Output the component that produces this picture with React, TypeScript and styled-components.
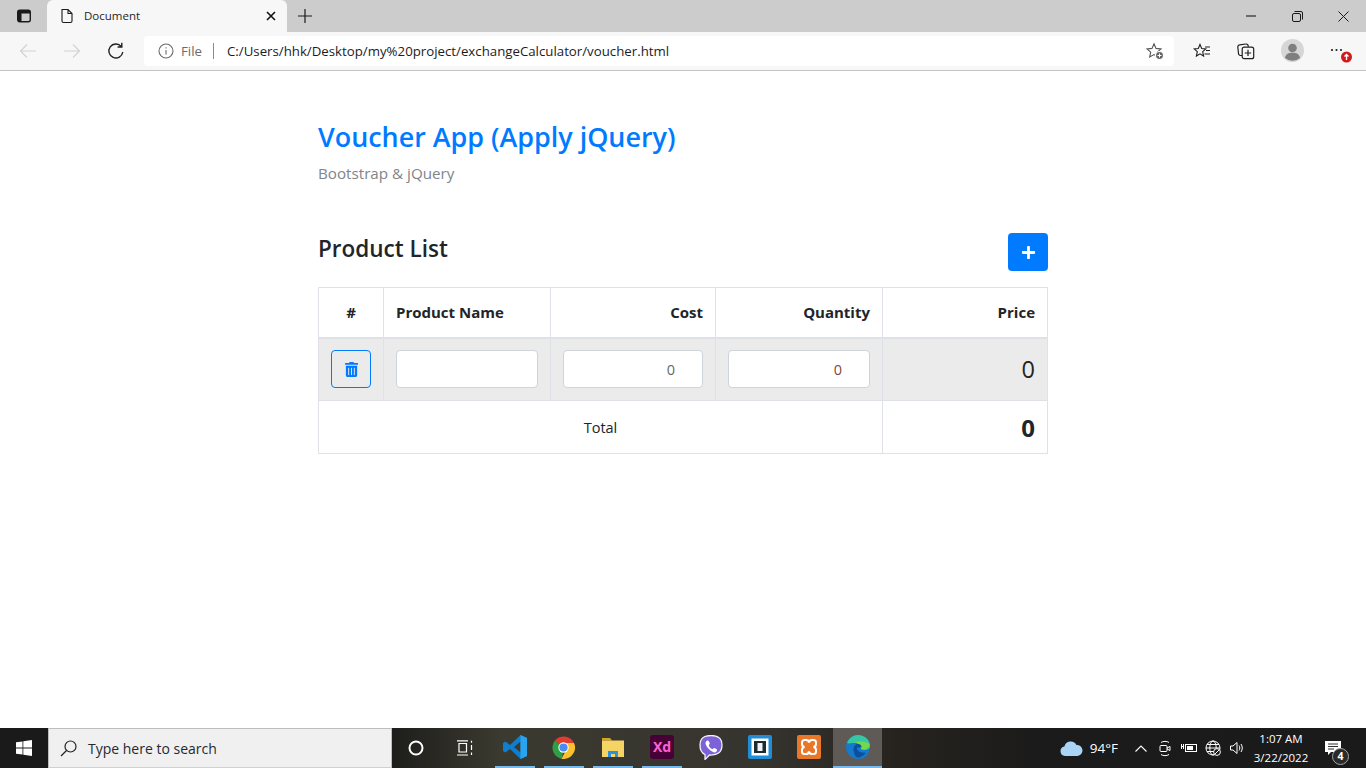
import { createGlobalStyle } from "styled-components";
import styled from "styled-components";
import { FaPlus, FaTrashAlt } from "react-icons/fa";

const GlobalStyle = createGlobalStyle`
	* {
		box-sizing: border-box;
	}
	html,
	body {
		margin: 0;
		height: 100%;
		background: #fff;
	}
	body {
		font-family: "Open Sans", "Noto Sans", "Liberation Sans", sans-serif;
		color: #212529;
		overflow: hidden;
	}
`;

const Screen = styled.div`
	width: 1366px;
	height: 768px;
	display: flex;
	flex-direction: column;
`;

/* browser chrome */
const TabBar = styled.div`
	height: 32px;
	flex: none;
	display: flex;
	background: #cccccc;
`;

const TabsButton = styled.div`
	width: 47px;
	display: flex;
	align-items: center;
	justify-content: center;
`;

const Tab = styled.div`
	width: 240px;
	display: flex;
	align-items: center;
	padding: 0 11px 1px 13px;
	background: #f7f7f7;
	border-radius: 6px 6px 0 0;
	font-size: 11.5px;
	color: #1f1f1f;
`;

const TabTitle = styled.span`
	flex: 1;
	margin-left: 10px;
`;

const NewTab = styled.div`
	width: 36px;
	display: flex;
	align-items: center;
	justify-content: center;
`;

const WindowControls = styled.div`
	margin-left: auto;
	display: flex;
`;

const WindowButton = styled.div`
	width: 46px;
	display: flex;
	align-items: center;
	justify-content: center;
`;

const Toolbar = styled.div`
	height: 39px;
	flex: none;
	display: flex;
	align-items: center;
	padding: 0 6px 1px;
	background: #f7f7f7;
	border-bottom: 1px solid #c4c4c4;
`;

const ToolButton = styled.div`
	width: 44px;
	height: 30px;
	flex: none;
	display: flex;
	align-items: center;
	justify-content: center;
`;

const ProfileButton = styled(ToolButton)`
	margin-left: 2px;
`;

const AddressBar = styled.div`
	width: 1030px;
	height: 30px;
	margin: 0 6px;
	display: flex;
	align-items: center;
	padding: 0 10px 0 14px;
	background: #fff;
	border-radius: 4px;
	font-size: 13.25px;
`;

const FileLabel = styled.span`
	margin-left: 7px;
	color: #6b6b6b;
`;

const Divider = styled.span`
	width: 1px;
	height: 16px;
	margin: 0 13px 0 11px;
	background: #8a8a8a;
`;

const Url = styled.span`
	flex: 1;
	color: #1c1c1c;
`;

/* page */
const Main = styled.main`
	flex: 1;
	width: 730px;
	margin: 0 auto;
	padding-top: 47px;
`;

const Title = styled.h1`
	margin: 0;
	font-size: 26.9px;
	line-height: 38px;
	font-weight: 600;
	color: #007bff;
`;

const Subtitle = styled.p`
	margin: 6px 0 0;
	font-size: 15.2px;
	line-height: 22px;
	color: #80858a;
`;

const ListHeader = styled.div`
	display: flex;
	justify-content: space-between;
	align-items: flex-start;
	margin-top: 49px;
`;

const ListTitle = styled.h2`
	margin: 0;
	font-size: 22.5px;
	line-height: 32px;
	font-weight: 600;
	color: #212529;
`;

const AddButton = styled.button`
	width: 40px;
	height: 38px;
	padding: 0;
	display: flex;
	align-items: center;
	justify-content: center;
	border: 0;
	border-radius: 4px;
	background: #007bff;
	color: #fff;
	font-size: 15px;
`;

const Table = styled.table`
	width: 729px;
	margin-top: 16px;
	border-collapse: collapse;
	table-layout: fixed;
	font-size: 15px;
`;

const HeadCell = styled.th<{ $w: number; $align?: string }>`
	width: ${(p) => p.$w}px;
	height: 50px;
	padding: 0 12px;
	text-align: ${(p) => p.$align || "left"};
	font-size: 15px;
	font-weight: 700;
	border: 1px solid #dee2e6;
	border-bottom: 2px solid #dee2e6;
`;

const BodyRow = styled.tr`
	background: #ebebeb;
`;

const Cell = styled.td<{ $align?: string }>`
	height: 63px;
	padding: 0 12px;
	text-align: ${(p) => p.$align || "left"};
	border: 1px solid #dee2e6;
`;

const TotalCell = styled.td<{ $align?: string; $big?: boolean }>`
	height: 53px;
	padding: 0 12px;
	text-align: ${(p) => p.$align || "left"};
	border: 1px solid #dee2e6;
	font-size: ${(p) => (p.$big ? "24px" : "14.5px")};
	font-weight: ${(p) => (p.$big ? 700 : 400)};
`;

const PriceValue = styled.span`
	font-size: 23.5px;
	font-weight: 500;
`;

const DeleteButton = styled.button`
	width: 40px;
	height: 38px;
	padding: 0;
	display: flex;
	align-items: center;
	justify-content: center;
	background: transparent;
	border: 1px solid #007bff;
	border-radius: 4px;
	color: #007bff;
	font-size: 15px;
`;

const Field = styled.input<{ $tone?: string }>`
	display: block;
	width: 100%;
	height: 38px;
	padding: 0 27px 0 12px;
	background: #fff;
	border: 1px solid #ced4da;
	border-radius: 4px;
	font-family: inherit;
	font-size: 14.5px;
	text-align: right;
	color: ${(p) => p.$tone || "#6a6a60"};
`;

/* taskbar */
const Taskbar = styled.div`
	height: 40px;
	flex: none;
	display: flex;
	color: #fff;
	background: linear-gradient(90deg, #1a1a1a 0, #1d1d1b 392px, #3b3a30 500px, #36342e 760px, #26231f 900px, #1b1b1b 1040px, #1a1a1a 100%);
`;

const StartButton = styled.div`
	width: 48px;
	display: flex;
	align-items: center;
	justify-content: center;
`;

const SearchBox = styled.div`
	width: 344px;
	display: flex;
	align-items: center;
	padding-left: 11px;
	background: #f0f0f0;
	border: 1px solid #bdbdbd;
	border-bottom-color: #d0d0d0;
	font-size: 14px;
	color: #1f2a33;
`;

const SearchText = styled.span`
	margin-left: 11px;
`;

const SystemButton = styled.div`
	width: 48px;
	display: flex;
	align-items: center;
	justify-content: center;
`;

const Apps = styled.div`
	display: flex;
	margin-left: 2px;
`;

const AppSlot = styled.div<{ $active?: boolean; $running?: boolean }>`
	position: relative;
	width: 49px;
	display: flex;
	align-items: center;
	justify-content: center;
	padding-bottom: 2px;
	background: ${(p) => (p.$active ? "#5f5a55" : "transparent")};
	&::after {
		content: "";
		display: ${(p) => (p.$running || p.$active ? "block" : "none")};
		position: absolute;
		bottom: 0;
		left: ${(p) => (p.$active ? "0" : "4.5px")};
		right: ${(p) => (p.$active ? "0" : "4.5px")};
		height: 2px;
		background: #76b9ed;
	}
`;

const Tray = styled.div`
	margin-left: auto;
	display: flex;
	align-items: center;
`;

const Weather = styled.div`
	display: flex;
	align-items: center;
	gap: 7px;
	margin-right: 11px;
	font-size: 13.5px;
`;

const TrayIcon = styled.div`
	width: 24px;
	display: flex;
	justify-content: center;
`;

const Clock = styled.div`
	width: 60px;
	margin-left: 2px;
	text-align: center;
	font-size: 11.5px;
	line-height: 19px;
	white-space: nowrap;
`;

const Notifications = styled.div`
	position: relative;
	width: 36px;
	margin: 0 15px 0 4px;
	display: flex;
	justify-content: center;
`;

const NotificationCount = styled.span`
	position: absolute;
	top: 7px;
	left: 17px;
	width: 17px;
	height: 17px;
	display: flex;
	align-items: center;
	justify-content: center;
	border-radius: 50%;
	background: #2a2a2a;
	border: 1px solid #a5a5a5;
	font-size: 10.5px;
	font-weight: 700;
`;

const Ico = styled.svg.attrs<{ stroke?: string }>((p) => ({
	stroke: p.stroke ?? "currentColor",
	fill: "none",
}))`
	display: block;
	flex: none;
`;

const AppBadgeText = styled.text`
	font-family: "Open Sans", sans-serif;
	font-size: 14px;
	font-weight: 700;
	fill: #ff61d5;
`;

function App() {
	return (
		<Screen>
			<GlobalStyle />
			<TabBar>
				<TabsButton>
					<Ico width="16" height="16" viewBox="0 0 16 16" color="#1a1a1a" strokeWidth="1.4">
						<rect x="1.700" y="2.200" width="12.600" height="11.600" rx="2" />
						<path d="M2 3h12v2.500H2zM2 5.500h3.500V13.500H2z" fill="#1a1a1a" stroke="none" />
					</Ico>
				</TabsButton>
				<Tab>
					<Ico width="14" height="16" viewBox="0 0 14 16" color="#1a1a1a" strokeWidth="1.1">
						<path d="M2 1.500h6l4 4V13a1.500 1.500 0 0 1-1.500 1.500h-7A1.500 1.500 0 0 1 2 13zM8 1.500v4h4" />
					</Ico>
					<TabTitle>Document</TabTitle>
					<Ico width="10" height="10" viewBox="0 0 10 10" color="#111" strokeWidth="1.600">
						<path d="M1 1l8 8M9 1l-8 8" />
					</Ico>
				</Tab>
				<NewTab>
					<Ico width="16" height="16" viewBox="0 0 16 16" color="#1a1a1a" strokeWidth="1.200">
						<path d="M8 1v14M1 8h14" />
					</Ico>
				</NewTab>
				<WindowControls>
					<WindowButton>
						<Ico width="10" height="2" viewBox="0 0 10 2" color="#1a1a1a" strokeWidth="1.100">
							<path d="M0 1h10" />
						</Ico>
					</WindowButton>
					<WindowButton>
						<Ico width="11" height="11" viewBox="0 0 11 11" color="#1a1a1a" strokeWidth="1">
							<rect x=".5" y="2.500" width="8" height="8" rx="1.500" />
							<path d="M2.500 .5h6.500a1.500 1.500 0 0 1 1.500 1.500v6.500" />
						</Ico>
					</WindowButton>
					<WindowButton>
						<Ico width="11" height="11" viewBox="0 0 11 11" color="#1a1a1a" strokeWidth="1">
							<path d="M.5 .5l10 10M10.500 .5l-10 10" />
						</Ico>
					</WindowButton>
				</WindowControls>
			</TabBar>

			<Toolbar>
				<ToolButton>
					<Ico width="18" height="16" viewBox="0 0 18 16" color="#d2d2d2" strokeWidth="1.200">
						<path d="M17 8H1.500M8 1.500L1.500 8 8 14.500" />
					</Ico>
				</ToolButton>
				<ToolButton>
					<Ico width="18" height="16" viewBox="0 0 18 16" color="#d2d2d2" strokeWidth="1.200">
						<path d="M1 8h15.500M10 1.500L16.500 8 10 14.500" />
					</Ico>
				</ToolButton>
				<ToolButton>
					<Ico width="18" height="18" viewBox="0 0 18 18" color="#1f1f1f" strokeWidth="1.400">
						<path d="M15.800 10a7 7 0 1 1-1.600-5.600M14.800 .8v4.200h-4.200" />
					</Ico>
				</ToolButton>
				<AddressBar>
					<Ico width="16" height="16" viewBox="0 0 16 16" color="#6b6b6b" strokeWidth="1.100">
						<circle cx="8" cy="8" r="7" />
						<path d="M8 7v4.500M8 4.200v1.300" />
					</Ico>
					<FileLabel>File</FileLabel>
					<Divider />
					<Url>C:/Users/hhk/Desktop/my%20project/exchangeCalculator/voucher.html</Url>
					<Ico width="18" height="18" viewBox="0 0 18 18" color="#555" strokeWidth="1.100">
						<path d="M8 1.800l2 4.600 5 .5-3.700 3.300 1 4.800L8 12.600l-4.300 2.400 1-4.800L1 6.900l5-.5z" />
						<circle cx="13.500" cy="13.500" r="4" fill="#666" stroke="#fff" />
						<path d="M13.500 11.500v4M11.500 13.500h4" stroke="#fff" strokeWidth="1" />
					</Ico>
				</AddressBar>
				<ToolButton>
					<Ico width="18" height="18" viewBox="0 0 18 18" color="#1f1f1f" strokeWidth="1.100">
						<path d="M7 2.500l1.700 4 4.100.4-3.100 2.800.9 4.300L7 11.800l-3.600 2.200.9-4.300L1.200 6.900l4.100-.4zM12 5h5M13 8.500h4M11.500 12h5.500" />
					</Ico>
				</ToolButton>
				<ToolButton>
					<Ico width="18" height="18" viewBox="0 0 18 18" color="#1f1f1f" strokeWidth="1.200">
						<path d="M5 13.500H3.500a2 2 0 0 1-2-2l-.7-6.500a2 2 0 0 1 1.800-2.200L9 2a2 2 0 0 1 2.200 1.800l.1 1" />
						<rect x="5.200" y="5.200" width="11.500" height="11.500" rx="2" />
						<path d="M11 7.800v6.300M7.800 11h6.300" />
					</Ico>
				</ToolButton>
				<ProfileButton>
					<Ico width="23" height="23" viewBox="0 0 23 23" stroke="none">
						<circle cx="11.500" cy="11.500" r="11.500" fill="#d6d6d6" />
						<circle cx="11.500" cy="9" r="4.300" fill="#7f7f7f" />
						<path d="M4 19c.8-4 3.600-5.200 7.500-5.200S18.200 15 19 19a11.500 11.500 0 0 1-15 0z" fill="#7f7f7f" />
					</Ico>
				</ProfileButton>
				<ProfileButton>
					<Ico width="28" height="24" viewBox="0 0 28 24" stroke="none">
						<circle cx="8" cy="11" r="1.100" fill="#1f1f1f" />
						<circle cx="12.500" cy="11" r="1.100" fill="#1f1f1f" />
						<circle cx="17" cy="11" r="1.100" fill="#1f1f1f" />
						<circle cx="22.500" cy="18" r="5.500" fill="#d11a1a" />
						<path d="M22.500 21v-5.500M20.500 17.500l2-2 2 2" stroke="#fff" strokeWidth="1.300" fill="none" />
					</Ico>
				</ProfileButton>
			</Toolbar>

			<Main>
				<Title>Voucher App (Apply jQuery)</Title>
				<Subtitle>Bootstrap &amp; jQuery</Subtitle>
				<ListHeader>
					<ListTitle>Product List</ListTitle>
					<AddButton>
						<FaPlus />
					</AddButton>
				</ListHeader>
				<Table>
					<thead>
						<tr>
							<HeadCell $w={65} $align="center">#</HeadCell>
							<HeadCell $w={167}>Product Name</HeadCell>
							<HeadCell $w={165} $align="right">Cost</HeadCell>
							<HeadCell $w={167} $align="right">Quantity</HeadCell>
							<HeadCell $w={165} $align="right">Price</HeadCell>
						</tr>
					</thead>
					<tbody>
						<BodyRow>
							<Cell>
								<DeleteButton>
									<FaTrashAlt />
								</DeleteButton>
							</Cell>
							<Cell>
								<Field type="text" />
							</Cell>
							<Cell>
								<Field type="text" defaultValue="0" />
							</Cell>
							<Cell>
								<Field type="text" defaultValue="0" $tone="#7d4a45" />
							</Cell>
							<Cell $align="right">
								<PriceValue>0</PriceValue>
							</Cell>
						</BodyRow>
						<tr>
							<TotalCell colSpan={4} $align="center">Total</TotalCell>
							<TotalCell $align="right" $big>0</TotalCell>
						</tr>
					</tbody>
				</Table>
			</Main>

			<Taskbar>
				<StartButton>
					<Ico width="16" height="16" viewBox="0 0 16 16" stroke="none">
						<path d="M0 2.300l6.500-.9v6.200H0zM7.300 1.300L16 0v7.600H7.300zM0 8.400h6.500v6.200L0 13.700zM7.300 8.400H16V16l-8.700-1.300z" fill="#fff" />
					</Ico>
				</StartButton>
				<SearchBox>
					<Ico width="17" height="17" viewBox="0 0 17 17" color="#222" strokeWidth="1.200">
						<circle cx="10.500" cy="6.500" r="5.500" />
						<path d="M6.500 10.500L1 16" />
					</Ico>
					<SearchText>Type here to search</SearchText>
				</SearchBox>
				<SystemButton>
					<Ico width="16" height="16" viewBox="0 0 16 16" color="#fff" strokeWidth="2">
						<circle cx="8" cy="8" r="6.500" />
					</Ico>
				</SystemButton>
				<SystemButton>
					<Ico width="17" height="16" viewBox="0 0 17 16" color="#fff" strokeWidth="1.200">
						<path d="M1 .8h11M3 3.500h7.500v8.500H3zM1 15h11M15.500 .8v2M15.500 5v5M15.500 12.500v2.500" />
					</Ico>
				</SystemButton>
				<Apps>
					<AppSlot $running>
						<Ico width="24" height="24" viewBox="0 0 24 24" stroke="none">
							<path d="M17.500 0L24 3v18l-6.500 3L7 14l-4.500 3.500L0 16V8l2.500-1.500L7 10zM17.500 6.500L11 12l6.500 5.500z" fill="#0e7fd0" fillRule="evenodd" />
							<path d="M17.500 0L24 3v18l-6.500 3z" fill="#2aa3ee" />
						</Ico>
					</AppSlot>
					<AppSlot $running>
						<Ico width="23" height="23" viewBox="0 0 24 24" stroke="none">
							<path d="M12 12L2.800 5A12 12 0 0 1 23 7.200H12z" fill="#e33b2e" />
							<path d="M12 12l-1.500 11.900A12 12 0 0 1 2.800 5z" fill="#2f9e44" />
							<path d="M12 7.200h11A12 12 0 0 1 10 23.800L16 12z" fill="#fbc02d" />
							<circle cx="12" cy="12" r="5.400" fill="#fff" />
							<circle cx="12" cy="12" r="4.300" fill="#4a8af4" />
						</Ico>
					</AppSlot>
					<AppSlot $running>
						<Ico width="22" height="20" viewBox="0 0 22 20" stroke="none">
							<path d="M0 1h8l2 2.500H0z" fill="#d9a520" />
							<path d="M0 3.500h22V20H0z" fill="#f6d365" />
							<path d="M6 20v-6h10v6h-3v-3H9v3z" fill="#2f8fd8" />
						</Ico>
					</AppSlot>
					<AppSlot $running>
						<Ico width="24" height="24" viewBox="0 0 24 24" stroke="none">
							<rect width="24" height="24" rx="3" fill="#470137" />
							<AppBadgeText x="12" y="17" textAnchor="middle">Xd</AppBadgeText>
						</Ico>
					</AppSlot>
					<AppSlot>
						<Ico width="24" height="25" viewBox="0 0 24 25" stroke="none">
							<path d="M12 .5C5 .5 1 3 1 10c0 5 1.500 8 5 9.500V24.500l4.500-4.500C19 20.500 23 17 23 10S19 .5 12 .5z" fill="#7d61d6" stroke="#f2f0fb" strokeWidth="1.300" />
							<path d="M7.500 6c1-.8 2-.6 2.500.5l.7 1.500c.2.600 0 1.100-.7 1.700-.3.300-.3.600 0 1.200.8 1.400 1.700 2.300 3 3 .5.200.8.200 1.100-.2.600-.7 1.200-.9 1.800-.5l1.400.9c1 .7 1 1.700.2 2.500-1 1-2.300 1-3.600.5C10.500 15 8 12.500 6.800 9.500 6.300 8.100 6.500 6.900 7.500 6z" fill="#fff" />
						</Ico>
					</AppSlot>
					<AppSlot>
						<Ico width="24" height="24" viewBox="0 0 24 24" stroke="none">
							<rect width="24" height="24" rx="2" fill="#1f8ed6" />
							<rect x="3.500" y="3.500" width="17" height="17" fill="#fff" />
							<rect x="6" y="6" width="12" height="12" fill="#1b2a33" />
							<rect x="9.500" y="8" width="5" height="8" fill="#f2f2f2" />
						</Ico>
					</AppSlot>
					<AppSlot>
						<Ico width="24" height="24" viewBox="0 0 24 24" stroke="none">
							<rect width="24" height="24" rx="2" fill="#e8772a" />
							<path d="M5 7.500A2.500 2.500 0 0 1 7.500 5H9a3 3 0 0 1 3 2.500A3 3 0 0 1 15 5h1.500A2.500 2.500 0 0 1 19 7.500V9a3 3 0 0 1-2.500 3 3 3 0 0 1 2.500 3v1.500a2.500 2.500 0 0 1-2.500 2.500H15a3 3 0 0 1-3-2.500A3 3 0 0 1 9 19H7.500A2.500 2.500 0 0 1 5 16.500V15a3 3 0 0 1 2.500-3A3 3 0 0 1 5 9z" stroke="#fff" strokeWidth="2" fill="none" />
						</Ico>
					</AppSlot>
					<AppSlot $active>
						<Ico width="24" height="24" viewBox="0 0 24 24" stroke="none">
							<circle cx="12" cy="12" r="12" fill="#1679c9" />
							<path d="M1 8C3 3 7 0 12 0c7 0 12 5 12 11 0 3-3 4-6 4-2 0-3-1-3-2 0-3-2-5-6-5S2 9 1 8z" fill="#37c6a4" />
							<path d="M23.500 9c.5 3-2 5.500-5.500 5.500-2 0-3.500-.5-3.500-2 0-2-2-5-6-4.500 3-2 9-3 15 1z" fill="#72d84f" />
							<path d="M7.500 14c0-3 2-5 4.500-5s3.500 1.500 3.500 3.500H11c-.5 3 3 6 9 5-2.500 3.500-5.500 5-8.500 5C9 22 7.500 17 7.500 14z" fill="#0c4f9e" />
						</Ico>
					</AppSlot>
				</Apps>
				<Tray>
					<Weather>
						<Ico width="23" height="16" viewBox="0 0 23 16" stroke="none">
							<path d="M5 16a4.800 4.800 0 0 1-.6-9.500A6.500 6.500 0 0 1 16.500 5 5.500 5.500 0 0 1 17.500 16z" fill="#a9d4f5" />
						</Ico>
						<span>94°F</span>
					</Weather>
					<TrayIcon>
						<Ico width="12" height="7" viewBox="0 0 12 7" color="#fff" strokeWidth="1.100">
							<path d="M.5 6.500L6 1l5.500 5.500" />
						</Ico>
					</TrayIcon>
					<TrayIcon>
						<Ico width="12" height="17" viewBox="0 0 12 17" color="#fff" strokeWidth="1">
							<path d="M2 2.500c2-1.500 6-1.500 8 0M2 14.500c2 1.500 6 1.500 8 0" />
							<rect x="1" y="5.500" width="7" height="6" rx="1" />
							<path d="M8 8l3-1.500v4L8 9" />
						</Ico>
					</TrayIcon>
					<TrayIcon>
						<Ico width="16" height="12" viewBox="0 0 16 12" color="#fff" strokeWidth="1">
							<rect x="4.500" y="2.500" width="11" height="7" />
							<path d="M6 4h6v4H6z" fill="#fff" stroke="none" />
							<path d="M0 4.500h3M.5 2v5M2.500 2v5" />
						</Ico>
					</TrayIcon>
					<TrayIcon>
						<Ico width="16" height="16" viewBox="0 0 16 16" color="#fff" strokeWidth="1">
							<circle cx="8" cy="8" r="7" />
							<ellipse cx="8" cy="8" rx="3.200" ry="7" />
							<path d="M1 8h14M2 4.500h12M2 11.500h12" />
							<circle cx="12" cy="12" r="3.400" fill="#1a1a1a" />
							<path d="M10 14l4-4" />
						</Ico>
					</TrayIcon>
					<TrayIcon>
						<Ico width="15" height="14" viewBox="0 0 15 14" color="#fff" strokeWidth="1">
							<path d="M.5 5h2.500L7 1.500v11L3 9H.5zM9 4.500c1 1.500 1 3.500 0 5M11 3c1.700 2.500 1.700 5.500 0 8" />
						</Ico>
					</TrayIcon>
					<Clock>
						1:07 AM
						<br />
						3/22/2022
					</Clock>
					<Notifications>
						<Ico width="16" height="15" viewBox="0 0 16 15" stroke="none">
							<path d="M0 0h16v11H6l-3 3v-3H0z" fill="#fff" />
							<path d="M3 3h10M3 5.500h10M3 8h6" stroke="#333" strokeWidth="1" />
						</Ico>
						<NotificationCount>4</NotificationCount>
					</Notifications>
				</Tray>
			</Taskbar>
		</Screen>
	);
}

export default App;
